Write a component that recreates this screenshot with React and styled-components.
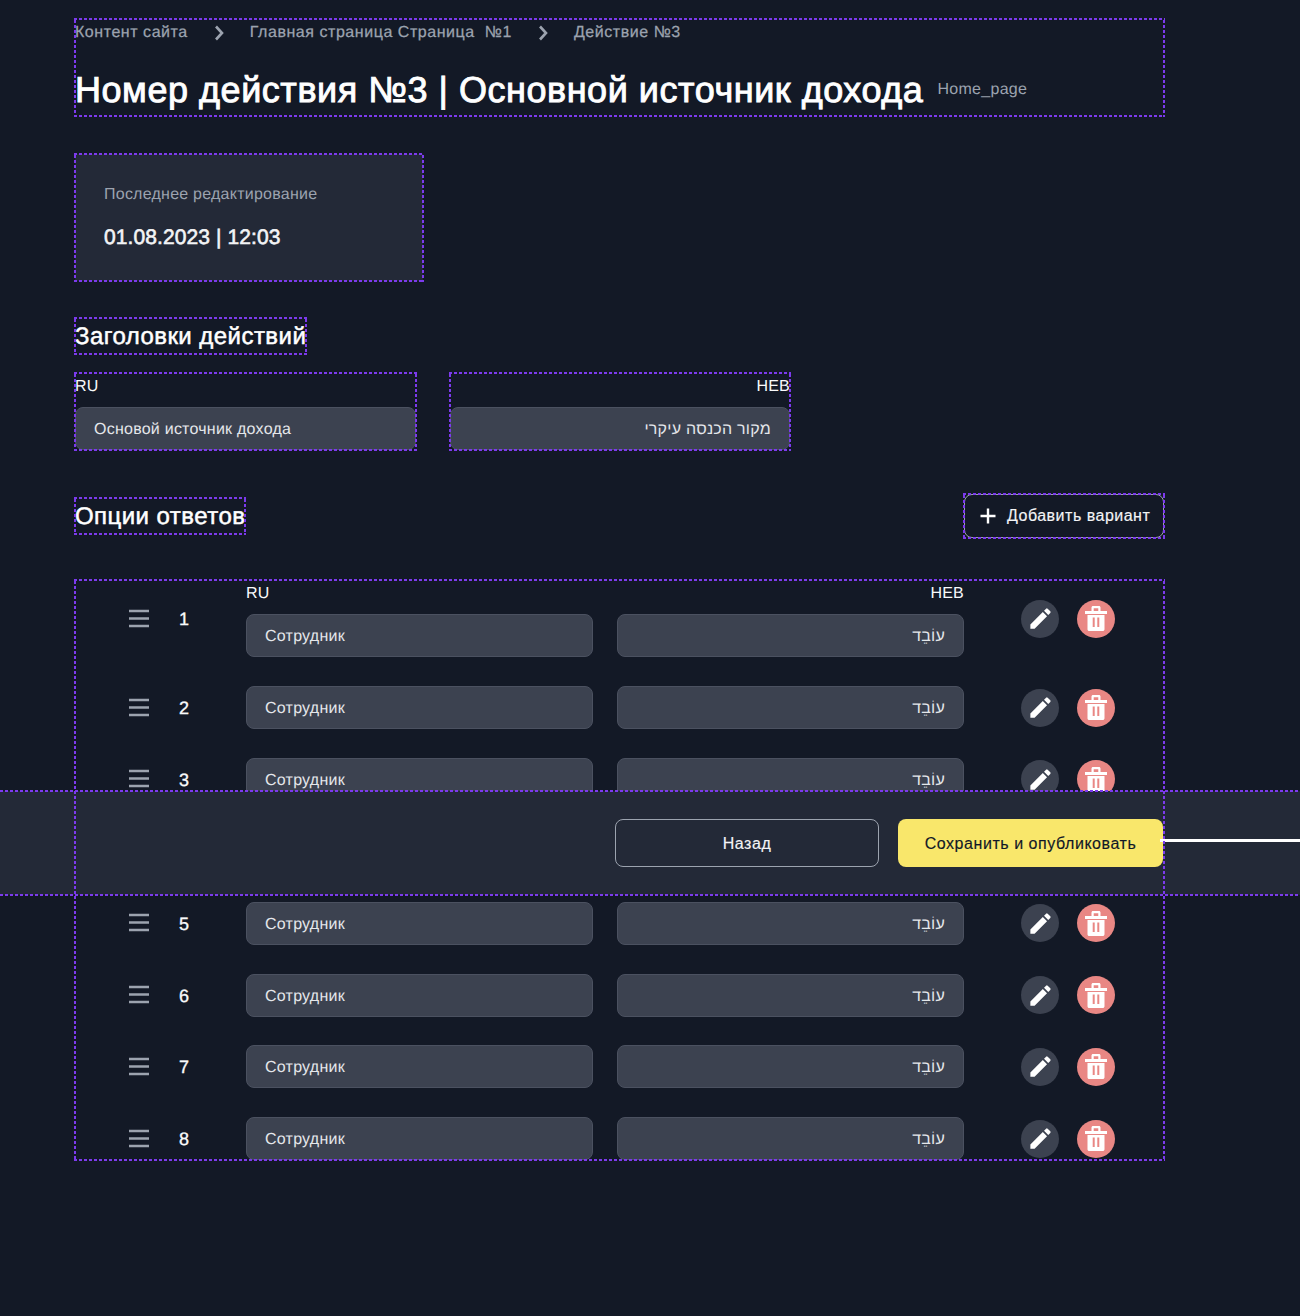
import React from 'react'
import styled, { createGlobalStyle, css } from 'styled-components'

const GlobalStyle = createGlobalStyle`
    html, body {
        margin: 0;
        padding: 0;
        background: #131926;
    }
    body {
        font-family: "Liberation Sans", Arial, sans-serif;
        letter-spacing: 0.24px;
        text-rendering: geometricPrecision;
        color: #fff;
    }
`;

const dashLines = css`
    linear-gradient(90deg, #7c3aed 60%, transparent 0) repeat-x top left / 5px 2px,
    linear-gradient(90deg, #7c3aed 60%, transparent 0) repeat-x bottom left / 5px 2px
`;

const dashes = css`
    &::after {
        content: '';
        position: absolute;
        inset: -1px;
        pointer-events: none;
        z-index: 5;
        background:
            ${dashLines},
            linear-gradient(0deg, #7c3aed 60%, transparent 0) repeat-y top left / 2px 5px,
            linear-gradient(0deg, #7c3aed 60%, transparent 0) repeat-y top right / 2px 5px;
    }
`;

const Page = styled.div`
    position: relative;
    width: 1300px;
    height: 1316px;
    overflow: hidden;
    background: #131926;
`;

const Content = styled.div`
    width: 1089px;
    margin-left: 75px;
    padding-top: 19px;
    display: flex;
    flex-direction: column;
`;

const Head = styled.header`
    position: relative;
    height: 97px;
    ${dashes}
`;

const Crumbs = styled.nav`
    display: flex;
    align-items: center;
    gap: 26px;
    height: 26px;
    font-size: 16px;
    color: #9ca3af;
    white-space: pre;
    letter-spacing: 0.55px;
    -webkit-text-stroke: 0.25px #9ca3af;
    padding-top: 1px;
`;

const TitleRow = styled.div`
    display: flex;
    align-items: center;
    gap: 14px;
    margin-top: 19px;
`;

const Title = styled.h1`
    margin: 0;
    font-size: 36px;
    line-height: 50px;
    font-weight: 400;
    letter-spacing: 0.54px;
    color: #fff;
    -webkit-text-stroke: 0.9px #fff;
    white-space: nowrap;
`;

const Slug = styled.span`
    font-size: 16px;
    letter-spacing: 0.3px;
    color: #9ca3af;
`;

const Card = styled.section`
    position: relative;
    width: 348px;
    height: 127px;
    box-sizing: border-box;
    margin-top: 38px;
    padding: 29px;
    background: #232937;
    ${dashes}
`;

const CardLabel = styled.div`
    font-size: 16px;
    line-height: 24px;
    color: #9ca3af;
`;

const CardValue = styled.div`
    margin-top: 17px;
    font-size: 21px;
    line-height: 28px;
    color: #f3f4f6;
    letter-spacing: 0.1px;
    -webkit-text-stroke: 0.6px #f3f4f6;
`;

const SectionTitle = styled.h2`
    position: relative;
    display: inline-block;
    margin: 0;
    padding-top: 1px;
    font-size: 24px;
    line-height: 35px;
    font-weight: 400;
    letter-spacing: 0.45px;
    color: #fff;
    -webkit-text-stroke: 0.5px #fff;
    white-space: nowrap;
    ${dashes}
`;

const SectionWrap = styled.div`
    display: flex;
    margin-top: ${p => p.$top}px;
`;

const TitleFields = styled.div`
    display: flex;
    gap: 34px;
    margin-top: 19px;
`;

const FieldGroup = styled.div`
    position: relative;
    width: 340.5px;
    display: flex;
    flex-direction: column;
    ${p => p.$outlined && dashes}
`;

const Lang = styled.div`
    font-size: 16px;
    line-height: 24px;
    padding-top: 2px;
    margin-bottom: 8px;
    color: #f9fafb;
    text-align: ${p => (p.$rtl ? 'right' : 'left')};
`;

const Field = styled.div`
    box-sizing: border-box;
    height: 43px;
    padding: 3px 18px 0;
    display: flex;
    align-items: center;
    background: #3c4250;
    border: 1px solid #4b5160;
    border-radius: 8px;
    font-size: 16px;
    color: #e5e7eb;
    direction: ${p => (p.$rtl ? 'rtl' : 'ltr')};
`;

const OptionsHead = styled.div`
    display: flex;
    align-items: center;
    justify-content: space-between;
    margin-top: 44px;
`;

const AddWrap = styled.div`
    position: relative;
    ${dashes}
`;

const AddButton = styled.button`
    display: flex;
    align-items: center;
    gap: 11px;
    box-sizing: border-box;
    width: 200px;
    height: 44px;
    padding: 0 0 0 15px;
    background: transparent;
    border: 1px solid #9ca3af;
    border-radius: 8px;
    font-family: inherit;
    letter-spacing: 0.5px;
    font-size: 16px;
    color: #f3f4f6;
    -webkit-text-stroke: 0.15px #f3f4f6;
    white-space: nowrap;
`;

const PlusIcon = styled.svg`
    width: 16px;
    height: 16px;
    flex: none;
`;

const List = styled.div`
    position: relative;
    margin-top: 42.3px;
    display: flex;
    flex-direction: column;
    gap: 28.85px;
    ${dashes}
    &::after {
        z-index: 30;
    }
`;

const Row = styled.div`
    display: flex;
    align-items: center;
    padding-left: 54px;
`;

const Handle = styled.svg`
    width: 20px;
    height: 20px;
    flex: none;
`;

const Num = styled.div`
    width: 67px;
    margin-left: 30px;
    padding-top: 1px;
    font-size: 18px;
    line-height: 24px;
    color: #f9fafb;
    -webkit-text-stroke: 0.35px #f9fafb;
`;

const Fields = styled.div`
    display: flex;
    gap: 24px;
`;

const OptionField = styled.div`
    width: 347px;
    display: flex;
    flex-direction: column;
`;

const Actions = styled.div`
    display: flex;
    gap: 18px;
    margin-left: 57px;
`;

const Round = styled.button`
    width: 38px;
    height: 38px;
    padding: 0;
    border: 0;
    border-radius: 50%;
    display: flex;
    align-items: center;
    justify-content: center;
    background: ${p => (p.$danger ? '#e98784' : '#3c4250')};
`;

const BottomBar = styled.div`
    position: absolute;
    left: 0;
    right: 0;
    top: 791px;
    height: 104px;
    z-index: 20;
    box-sizing: border-box;
    padding-right: 137px;
    display: flex;
    align-items: center;
    justify-content: flex-end;
    gap: 19px;
    background: #232937;
    &::after {
        content: '';
        position: absolute;
        inset: -1px 0;
        pointer-events: none;
        background: ${dashLines};
    }
`;

const Button = styled.button`
    width: ${p => (p.$primary ? 265 : 264)}px;
    height: 48px;
    padding: 2px 0 0;
    border-radius: 8px;
    font-family: inherit;
    letter-spacing: 0.55px;
    font-size: 16px;
    box-sizing: border-box;
    border: ${p => (p.$primary ? '0' : '1px solid #9ca3af')};
    background: ${p => (p.$primary ? '#f9e76b' : 'transparent')};
    color: ${p => (p.$primary ? '#111827' : '#f3f4f6')};
    -webkit-text-stroke: 0.15px ${p => (p.$primary ? '#111827' : '#f3f4f6')};
`;

const Pointer = styled.div`
    position: absolute;
    left: 1160px;
    right: 0;
    top: 48px;
    height: 3px;
    background: #fff;
    z-index: 40;
`;

const Chevron = () => (
    <svg width="10" height="16" viewBox="0 0 10 16" fill="none">
        <path d="M2 1.5 8 8l-6 6.5" stroke="#9ca3af" strokeWidth="2.6" />
    </svg>
)

const Bars = () => (
    <Handle viewBox="0 0 20 20">
        <path d="M0 2h20M0 9.500h20M0 17h20" stroke="#9ca3af" strokeWidth="2.500" />
    </Handle>
)

const Pencil = () => (
    <svg width="27" height="27" viewBox="0 0 24 24" fill="#fff">
        <path d="M3 17.25V21h3.75L17.81 9.94l-3.75-3.75L3 17.25zM20.71 7.04c.39-.39.39-1.02 0-1.41l-2.34-2.34a.9959.9959 0 0 0-1.41 0l-1.83 1.83 3.75 3.75 1.83-1.83z" />
    </svg>
)

const Trash = () => (
    <svg width="22" height="25" viewBox="0 0 22 25" fill="#fff">
        <path fillRule="evenodd" d="M6.500 5V1.500C6.500.7 7.200 0 8 0h6c.8 0 1.500.7 1.500 1.500V5H22v3H0V5h6.500zm2.200 0h4.600V2.200H8.700V5z" />
        <path fillRule="evenodd" d="M2.500 9h17v14.200c0 1.100-.8 1.800-1.800 1.800H4.300c-1 0-1.800-.7-1.800-1.800V9zm5.200 2.500v9.500h2v-9.500h-2zm4.600 0v9.500h2v-9.500h-2z" />
    </svg>
)

const Plus = () => (
    <PlusIcon viewBox="0 0 16 16">
        <path d="M8 .5v15M.5 8h15" stroke="#fff" strokeWidth="2.400" />
    </PlusIcon>
)

const rows = [1, 2, 3, 4, 5, 6, 7, 8]

export default function App() {
    return (
        <Page>
            <GlobalStyle />
            <Content>
                <Head>
                    <Crumbs>
                        <span>Контент сайта</span>
                        <Chevron />
                        <span>Главная страница Страница  №1</span>
                        <Chevron />
                        <span>Действие №3</span>
                    </Crumbs>
                    <TitleRow>
                        <Title>Номер действия №3 | Основной источник дохода</Title>
                        <Slug>Home_page</Slug>
                    </TitleRow>
                </Head>

                <Card>
                    <CardLabel>Последнее редактирование</CardLabel>
                    <CardValue>01.08.2023 | 12:03</CardValue>
                </Card>

                <SectionWrap $top={37}>
                    <SectionTitle>Заголовки действий</SectionTitle>
                </SectionWrap>

                <TitleFields>
                    <FieldGroup $outlined>
                        <Lang>RU</Lang>
                        <Field>Основой источник дохода</Field>
                    </FieldGroup>
                    <FieldGroup $outlined>
                        <Lang $rtl>HEB</Lang>
                        <Field $rtl>מקור הכנסה עיקרי</Field>
                    </FieldGroup>
                </TitleFields>

                <OptionsHead>
                    <SectionTitle>Опции ответов</SectionTitle>
                    <AddWrap>
                        <AddButton><Plus />Добавить вариант</AddButton>
                    </AddWrap>
                </OptionsHead>

                <List>
                    {rows.map((n) => (
                        <Row key={n}>
                            <Bars />
                            <Num>{n}</Num>
                            <Fields>
                                <OptionField>
                                    {n === 1 && <Lang>RU</Lang>}
                                    <Field>Сотрудник</Field>
                                </OptionField>
                                <OptionField>
                                    {n === 1 && <Lang $rtl>HEB</Lang>}
                                    <Field $rtl>עוֹבֵד</Field>
                                </OptionField>
                            </Fields>
                            <Actions>
                                <Round><Pencil /></Round>
                                <Round $danger><Trash /></Round>
                            </Actions>
                        </Row>
                    ))}
                </List>
            </Content>

            <BottomBar>
                <Button>Назад</Button>
                <Button $primary>Сохранить и опубликовать</Button>
                <Pointer />
            </BottomBar>
        </Page>
    )
}
